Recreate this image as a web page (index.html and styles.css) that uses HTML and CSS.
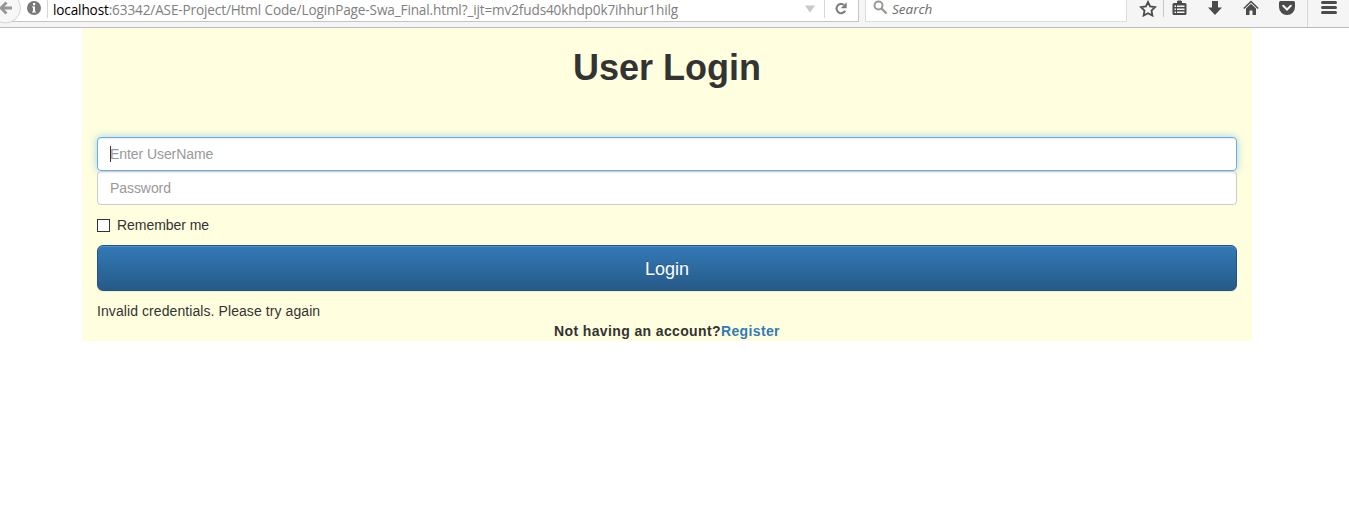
FILE: index.html
```html
<!DOCTYPE html>
<html lang="en">
<head>
<meta charset="utf-8">
<title>User Login</title>
<link rel="stylesheet" href="styles.css">
</head>
<body>
<header class="toolbar">
  <div class="address">
    <svg class="back" width="22" height="27" viewBox="0 0 22 27"><circle cx="5.500" cy="8" r="15" fill="#f7f7f7" stroke="#d4d4d4"/><path d="M12 8H2M6.500 2.500L1 8l5.500 5.500" fill="none" stroke="#969696" stroke-width="2.800"/></svg>
    <svg class="info" width="14" height="16" viewBox="0 0 14 16"><circle cx="7" cy="8" r="7" fill="#787878"/><path d="M5 6.500h3v5h1v1H5v-1h1v-4H5zM6 3h2.200v2.200H6z" fill="#fff"/></svg>
    <div class="url"><span class="host">localhost</span>:63342/ASE-Project/Html Code/LoginPage-Swa_Final.html?_ijt=mv2fuds40khdp0k7ihhur1hilg</div>
    <svg class="drop" width="10" height="8" viewBox="0 0 10 8"><path d="M0 .5h10L5 7.500z" fill="#c8c8c8"/></svg>
    <div class="reload"><svg width="12" height="13" viewBox="0 0 12 13"><path d="M8.800 2.800A4.600 4.600 0 1 0 10.200 8.800" fill="none" stroke="#7b7b7b" stroke-width="2"/><path d="M11.700.3v6H5.700z" fill="#7b7b7b"/></svg></div>
  </div>
  <div class="search">
    <svg width="15" height="15" viewBox="0 0 15 15"><circle cx="5.500" cy="5.500" r="4" fill="none" stroke="#999" stroke-width="2"/><path d="M8.500 8.500l5 5" stroke="#999" stroke-width="2.400"/></svg>
    <span>Search</span>
  </div>
  <div class="actions">
    <svg class="star" width="18" height="18" viewBox="0 0 18 18"><path d="M9 2l2.100 4.500 5 .6-3.600 3.500.9 5L9 13.200l-4.400 2.400.9-5L1.900 7.100l5-.6z" fill="none" stroke="#4b4b4b" stroke-width="1.800"/></svg>
    <svg class="list" width="15" height="17" viewBox="0 0 15 17"><path d="M2 3h3V1.500L6 .5h3l1 1V3h3q1.500 0 1.500 1.500v9q0 1.500-1.500 1.500H2Q.5 15 .5 13.500v-9Q.5 3 2 3z" fill="#4b4b4b"/><path d="M2.500 5.500h1.500V7H2.500zM5 5.500h7.500V7H5zM2.500 8.500h1.500V10H2.500zM5 8.500h7.500V10H5zM2.500 11.500h1.500V13H2.500zM5 11.500h7.500V13H5z" fill="#f5f5f5"/></svg>
    <svg class="down" width="14" height="16" viewBox="0 0 14 16"><path d="M4 1h6v6.500h4L7 15 0 7.500h4z" fill="#4b4b4b"/></svg>
    <svg class="home" width="16" height="16" viewBox="0 0 16 16"><path d="M.8 8.500L8 1.500l7.200 7" fill="none" stroke="#4b4b4b" stroke-width="1.500"/><path d="M3 8.500l5-4.800 5 4.800V15H9.500v-4.500h-3V15H3z" fill="#4b4b4b"/></svg>
    <svg class="pocket" width="16" height="16" viewBox="0 0 16 16"><path d="M1.500 1h13Q16 1 16 2.500V7a8 8 0 0 1-16 0V2.500Q0 1 1.500 1z" fill="#4b4b4b"/><path d="M4.200 5.800L8 9.500l3.800-3.700" fill="none" stroke="#f5f5f5" stroke-width="2" stroke-linecap="round"/></svg>
    <div class="menu"><svg width="16" height="15" viewBox="0 0 16 15"><path d="M1.500 2.500h13M1.500 7.500h13M1.500 12.500h13" stroke="#4b4b4b" stroke-width="3" stroke-linecap="round"/></svg></div>
  </div>
</header>
<main class="container">
  <h1>User Login</h1>
  <form>
    <div class="field"><input class="control focused" type="text" placeholder="Enter UserName"><i class="caret"></i></div>
    <div class="field"><input class="control" type="password" placeholder="Password"></div>
    <label class="remember"><input class="check" type="checkbox">Remember me</label>
    <button class="submit" type="button">Login</button>
  </form>
  <div class="message">Invalid credentials. Please try again</div>
  <div class="signup">Not having an account?<a href="#">Register</a></div>
</main>
</body>
</html>
```
FILE: styles.css
```css
* { box-sizing: border-box; }
body {
  margin: 0;
  background: #fff;
  color: #333;
  font: 14px/20px "Liberation Sans", Arial, sans-serif;
  overflow: hidden;
}
svg { display: block; flex: none; }
.toolbar {
  display: flex;
  align-items: flex-start;
  height: 28px;
  background: #f5f5f5;
  border-bottom: 1px solid #bcbcbc;
  overflow: hidden;
}
.address {
  display: flex;
  width: 859px;
  height: 22px;
  background: #fff;
  border-right: 1px solid #c4c4c4;
  border-bottom: 1px solid #c4c4c4;
}
.back { margin-right: 5px; }
.url {
  width: 758px;
  height: 18px;
  margin-left: 6px;
  padding-left: 5px;
  border-left: 1px solid #d6d6d6;
  color: #808080;
  font: 13.6px/19px "Open Sans", "Noto Sans", sans-serif;
  letter-spacing: -.14px;
  white-space: nowrap;
}
.host { color: #000; }
.drop { margin-top: 5px; }
.reload {
  height: 18px;
  margin-left: 9px;
  padding: 2px 0 0 10px;
  border-left: 1px solid #d6d6d6;
}
.search {
  display: flex;
  width: 262px;
  height: 22px;
  margin-left: 6px;
  padding: 0 0 0 7px;
  background: #fff;
  border: solid #dcdcdc;
  border-width: 0 1px 1px;
  color: #6c6c6c;
  font: italic 13.5px/19px "Open Sans", "Noto Sans", sans-serif;
}
.search span { margin-left: 4px; }
.actions { display: flex; }
.star { margin: 0 6px 0 12px; }
.list {
  width: 24px;
  padding-left: 8px;
  border-left: 1px solid #c6c6c6;
}
.down { margin-left: 21px; }
.home { margin-left: 21px; }
.pocket { margin-left: 20px; }
.menu {
  height: 27px;
  margin-left: 12px;
  padding-left: 13px;
  border-left: 1px solid #d6d6d6;
}
.container {
  width: 1170px;
  height: 313px;
  margin-left: 82px;
  padding: 20px 15px 0;
  background: #ffffdf;
}
h1 {
  margin: 0 0 49px;
  font-size: 36px;
  line-height: 40px;
  text-align: center;
}
.field { position: relative; height: 34px; }
.control {
  display: block;
  width: 100%;
  height: 34px;
  padding: 6px 12px;
  border: 1px solid #ccc;
  border-radius: 4px;
  background: #fff;
  box-shadow: inset 0 1px 1px rgba(0, 0, 0, .075);
  font: inherit;
  letter-spacing: -.07px;
}
.control::placeholder { color: #999; opacity: 1; }
.focused {
  border-color: #66afe9;
  box-shadow: inset 0 1px 1px rgba(0, 0, 0, .075), 0 0 8px rgba(102, 175, 233, .6);
}
.caret {
  position: absolute;
  left: 13px;
  top: 9px;
  width: 1px;
  height: 16px;
  background: #333;
}
.remember {
  display: flex;
  align-items: center;
  height: 20px;
  margin: 10px 0;
  letter-spacing: -.05px;
}
.check {
  appearance: none;
  width: 13px;
  height: 13px;
  margin: 1px 7px 0 0;
  border: 1px solid #333;
  background: #fff;
}
.submit {
  display: block;
  width: 100%;
  height: 46px;
  padding: 2px 16px 0;
  border: 1px solid #245580;
  border-radius: 6px;
  background: linear-gradient(#337ab7, #265a88);
  box-shadow: inset 0 1px 0 rgba(255, 255, 255, .15), 0 1px 1px rgba(0, 0, 0, .075);
  color: #fff;
  font: 18px/24px "Liberation Sans", Arial, sans-serif;
  text-shadow: 0 -1px 0 rgba(0, 0, 0, .2);
}
.message { margin-top: 10px; letter-spacing: .08px; }
.signup { font-weight: bold; letter-spacing: .37px; text-align: center; }
.signup a { color: #337ab7; text-decoration: none; }
```
